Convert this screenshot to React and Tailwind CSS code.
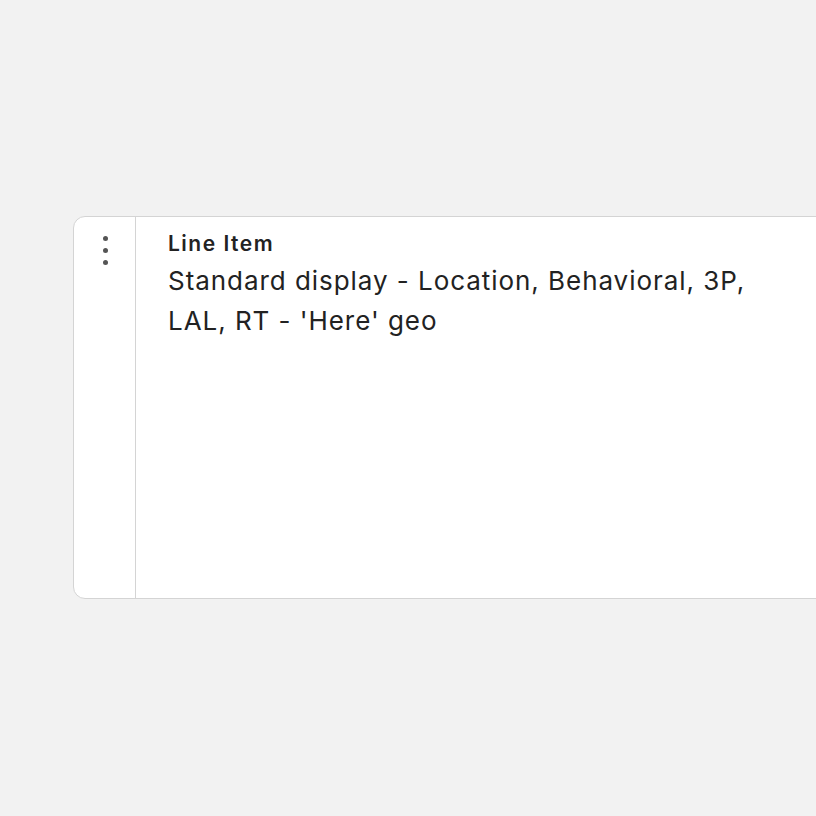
export default function App() {
  return (
    <div className="w-[816px] h-[816px] bg-[#f2f2f2] overflow-hidden relative" style={{ fontFamily: 'Inter, "Noto Sans", sans-serif' }}>
      <div className="absolute left-[73px] top-[216px] w-[800px] h-[383px] bg-white border border-[#d4d4d4] rounded-[12px] flex">
        <div className="w-[62px] shrink-0 border-r border-[#d4d4d4] flex flex-col items-center pt-[19px] gap-[7px]">
          <span className="w-[5px] h-[5px] rounded-full bg-[#555555] ml-[1px]" />
          <span className="w-[5px] h-[5px] rounded-full bg-[#555555] ml-[1px]" />
          <span className="w-[5px] h-[5px] rounded-full bg-[#555555] ml-[1px]" />
        </div>
        <div className="pl-[32px] pt-[13px] w-[632px]">
          <div className="text-[21px] font-semibold text-[#222222] leading-[28px] tracking-[1.5px]">Line Item</div>
          <div className="text-[26px] text-[#222222] leading-[40px] tracking-[0.95px] mt-[3px]">Standard display - Location, Behavioral, 3P, LAL, RT - 'Here' geo</div>
        </div>
      </div>
    </div>
  );
}
